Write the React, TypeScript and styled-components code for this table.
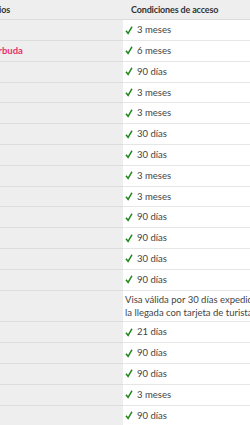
import React from "react";
import styled, { createGlobalStyle } from "styled-components";

const GlobalStyle = createGlobalStyle`
  body {
    margin: 0;
    background: #ffffff;
    font-family: Lato, "Open Sans", sans-serif;
  }
`;

const Viewport = styled.div`
  width: 250px;
  height: 425px;
  overflow: hidden;
`;

const Table = styled.table`
  border-collapse: collapse;
  margin-left: -85px;
  width: 354px;
  font-size: 9.5px;
  color: #444444;
  table-layout: fixed;
`;

const Col = styled.col<{ $w: number }>`
  width: ${(p) => p.$w}px;
`;

const Th = styled.th<{ $first?: boolean }>`
  background: #eeeeee;
  color: #333333;
  font-weight: 700;
  font-size: 9px;
  letter-spacing: -0.15px;
  text-align: left;
  height: 19.3px;
  padding: 0 0 0 ${(p) => (p.$first ? "24px" : "8px")};
  border-bottom: 1px solid #dddddd;
  white-space: nowrap;
  overflow: hidden;
`;

const Td = styled.td<{ $note?: boolean }>`
  padding: ${(p) => (p.$note ? "2.35px 0 2.35px 2px" : "0 0 0 2px")};
  line-height: ${(p) => (p.$note ? "13px" : "19.8px")};
  border-bottom: 1px solid #e6e6e6;
  vertical-align: middle;
`;

const NameTd = styled.td`
  background: #eeeeee;
  padding: 0 0 0 30px;
  border-bottom: 1px solid #dddddd;
  white-space: nowrap;
  overflow: hidden;
`;

const Link = styled.a`
  color: #e8316a;
  font-weight: 700;
  text-decoration: none;
`;

const Ok = styled.div`
  display: flex;
  align-items: center;
  gap: 4px;
  height: 19.8px;
`;

const Check = () => (
  <svg width="8" height="9" viewBox="0 0 8 10">
    <path d="M0 5.9 L1.4 4.7 L2.9 6.6 L6.7 0.4 L8 1.3 L3.1 9.6 Z" fill="#23871f" />
  </svg>
);

type Row = { name: string; access: string; link?: boolean; note?: boolean };

const rows: Row[] = [
  { name: "Andorra", access: "3 meses" },
  { name: "Antigua y Barbuda", access: "6 meses", link: true },
  { name: "Argentina", access: "90 días" },
  { name: "Armenia", access: "3 meses" },
  { name: "Australia", access: "3 meses" },
  { name: "Austria", access: "30 días" },
  { name: "Bahamas", access: "30 días" },
  { name: "Barbados", access: "3 meses" },
  { name: "Bélgica", access: "3 meses" },
  { name: "Belice", access: "90 días" },
  { name: "Bolivia", access: "90 días" },
  { name: "Brasil", access: "30 días" },
  { name: "Brunéi", access: "90 días" },
  {
    name: "Camboya",
    access: "Visa válida por 30 días expedida a la llegada con tarjeta de turista",
    note: true,
  },
  { name: "Canadá", access: "21 días" },
  { name: "Chile", access: "90 días" },
  { name: "Chipre", access: "90 días" },
  { name: "Colombia", access: "3 meses" },
  { name: "Corea", access: "90 días" },
];

const App = () => {
  return (
    <Viewport>
      <GlobalStyle />
      <Table>
        <colgroup>
          <Col $w={208} />
          <Col $w={146} />
        </colgroup>
        <thead>
          <tr>
            <Th $first>Países y territorios</Th>
            <Th>Condiciones de acceso</Th>
          </tr>
        </thead>
        <tbody>
          {rows.map((row) => (
            <tr key={row.name}>
              <NameTd>{row.link ? <Link>{row.name}</Link> : row.name}</NameTd>
              <Td $note={row.note}>
                {row.note ? (
                  row.access
                ) : (
                  <Ok>
                    <Check />
                    {row.access}
                  </Ok>
                )}
              </Td>
            </tr>
          ))}
        </tbody>
      </Table>
    </Viewport>
  );
};

export default App;
